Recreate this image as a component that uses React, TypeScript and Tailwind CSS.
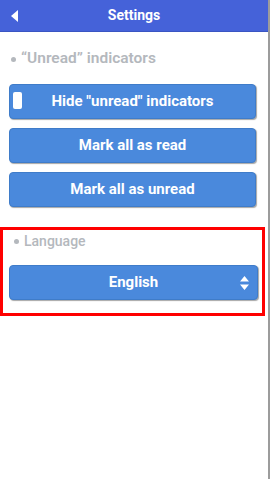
const btn =
  'flex h-[35px] w-full items-center justify-center rounded-[4px] border border-[#3f7cc9] bg-[#4a89dc] text-[15px] font-bold text-white shadow-[1px_1px_1px_rgba(0,0,0,0.35)]';

function SectionLabel({ children, className = '' }: { children: React.ReactNode; className?: string }) {
  return (
    <div className={`flex h-5 items-center gap-[5px] pl-[11px] text-[#b4b8bd] ${className}`}>
      <span className="h-[5px] w-[5px] rounded-full bg-[#b4b8bd]" />
      {children}
    </div>
  );
}

export default function App() {
  return (
    <div className="min-h-[479px] w-[270px] border-r-2 border-[#9c9c9c] bg-white font-['Roboto','Liberation_Sans',sans-serif]">
      <header className="relative flex h-8 items-center justify-center border-b border-[#3a55c2] bg-[#4562d9]">
        <svg className="absolute left-[11px] top-[10px]" width="7" height="12" viewBox="0 0 7 12">
          <path d="M7 0 L0 6 L7 12 Z" fill="white" />
        </svg>
        <span className="text-[14px] font-bold text-white">Settings</span>
      </header>

      <div className="pt-[17px]">
        <SectionLabel className="text-[15.5px] font-semibold">“Unread” indicators</SectionLabel>
        <div className="mt-[15px] flex flex-col gap-[9px] pl-[9px] pr-[12px]">
          <button className={`${btn} relative`}>
            <span className="absolute left-[3px] top-[7px] h-[17px] w-[9px] rounded-[2px] bg-white" />
            Hide "unread" indicators
          </button>
          <button className={btn}>Mark all as read</button>
          <button className={btn}>Mark all as unread</button>
        </div>
      </div>

      <div className="mt-5 w-[265px] border-[3px] border-[#ff0000] pb-[13px] pl-[6px] pr-[4px] pt-px">
        <div className="-ml-[6px]">
          <SectionLabel className="text-[14px] font-medium">Language</SectionLabel>
        </div>
        <button className={`${btn} relative mt-[14px]`}>
          English
          <svg className="absolute right-[8px] top-[10px]" width="9" height="14" viewBox="0 0 9 14">
            <path d="M4.5 0 L9 5.5 L0 5.5 Z M0 8.5 L9 8.5 L4.5 14 Z" fill="white" />
          </svg>
        </button>
      </div>
    </div>
  );
}
